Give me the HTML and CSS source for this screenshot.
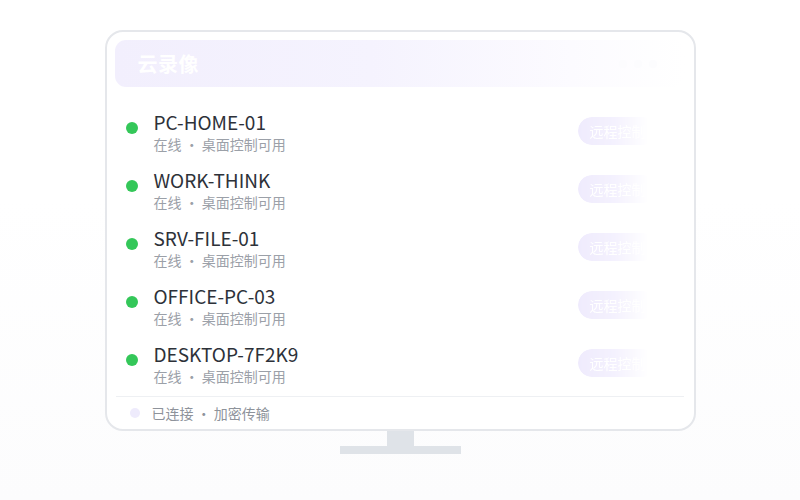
FILE: index.html
```html
<!DOCTYPE html>
<html lang="zh-CN">
<head>
<meta charset="utf-8">
<title>云录像</title>
<link rel="stylesheet" href="styles.css">
</head>
<body>
<div class="stage">
  <div class="monitor">
    <div class="screen">
      <div class="header">
        <span class="title">云录像</span>
        <span class="controls"><i></i><i></i><i></i></span>
      </div>
      <ul class="list">
        <li class="row">
          <span class="dot"></span>
          <div class="info"><div class="name">PC-HOME-01</div><div class="sub">在线 · 桌面控制可用</div></div>
          <span class="btn">远程控制</span>
        </li>
        <li class="row">
          <span class="dot"></span>
          <div class="info"><div class="name">WORK-THINK</div><div class="sub">在线 · 桌面控制可用</div></div>
          <span class="btn">远程控制</span>
        </li>
        <li class="row">
          <span class="dot"></span>
          <div class="info"><div class="name">SRV-FILE-01</div><div class="sub">在线 · 桌面控制可用</div></div>
          <span class="btn">远程控制</span>
        </li>
        <li class="row">
          <span class="dot"></span>
          <div class="info"><div class="name">OFFICE-PC-03</div><div class="sub">在线 · 桌面控制可用</div></div>
          <span class="btn">远程控制</span>
        </li>
        <li class="row">
          <span class="dot"></span>
          <div class="info"><div class="name">DESKTOP-7F2K9</div><div class="sub">在线 · 桌面控制可用</div></div>
          <span class="btn">远程控制</span>
        </li>
      </ul>
      <div class="footer">
        <span class="fdot"></span>
        <span class="ftext">已连接 · 加密传输</span>
      </div>
    </div>
    <div class="neck"></div>
    <div class="base"></div>
  </div>
</div>
</body>
</html>
```

FILE: styles.css
```css
html, body {
  margin: 0;
  padding: 0;
}
body {
  width: 800px;
  height: 500px;
  overflow: hidden;
  background: linear-gradient(180deg, #ffffff 0%, #ffffff 40%, #fcfcfd 100%);
  font-family: "Noto Sans CJK SC", "Noto Sans", sans-serif;
}
.stage {
  display: flex;
  justify-content: center;
  padding-top: 30px;
}
.monitor {
  width: 591px;
  display: flex;
  flex-direction: column;
  align-items: center;
}
.screen {
  box-sizing: border-box;
  width: 591px;
  height: 401px;
  border: 2px solid #e5e7eb;
  border-radius: 18px;
  background: #fff;
  padding: 8px 9px 0 8px;
  display: flex;
  flex-direction: column;
}
.header {
  height: 47px;
  border-radius: 11px;
  background: linear-gradient(90deg, #f2effd 0%, #f5f3fe 45%, #fcfbff 80%, #ffffff 100%);
  display: flex;
  align-items: center;
  justify-content: space-between;
  padding: 0 14px 0 23px;
  flex-shrink: 0;
}
.title {
  color: #ffffff;
  font-size: 20px;
  font-weight: 700;
  letter-spacing: 0.5px;
}
.controls {
  display: flex;
  gap: 7px;
  margin-right: 14px;
}
.controls i {
  width: 8px;
  height: 8px;
  border-radius: 50%;
  background: #fcfcfe;
}
.list {
  list-style: none;
  margin: 16px 0 0 0;
  padding: 0;
}
.row {
  height: 58px;
  display: flex;
  align-items: center;
  padding: 0 27px 0 11px;
}
.dot {
  width: 12px;
  height: 12px;
  border-radius: 50%;
  background: #34c759;
  margin-bottom: 8px;
  margin-right: 16px;
  flex-shrink: 0;
}
.info {
  flex: 1;
  display: flex;
  flex-direction: column;
}
.name {
  font-size: 19px;
  line-height: 24px;
  color: #2d3139;
}
.sub {
  font-size: 14px;
  line-height: 20px;
  color: #9ba0a8;
}
.btn {
  height: 28px;
  line-height: 28px;
  padding: 0 12px;
  border-radius: 14px;
  background: #efebfd;
  color: #ffffff;
  font-size: 14px;
  margin-bottom: 2px;
  -webkit-mask-image: linear-gradient(90deg, #000 0%, rgba(0,0,0,0.7) 45%, rgba(0,0,0,0) 88%);
  mask-image: linear-gradient(90deg, #000 0%, rgba(0,0,0,0.7) 45%, rgba(0,0,0,0) 88%);
}
.footer {
  margin-top: 3px;
  border-top: 1px solid #eef0f3;
  height: 32px;
  display: flex;
  align-items: center;
  padding-left: 14px;
  margin-right: 1px;
  margin-left: 1px;
}
.fdot {
  width: 10px;
  height: 10px;
  border-radius: 50%;
  background: #eeebfc;
  margin-right: 12px;
}
.ftext {
  font-size: 14px;
  color: #8e939b;
}
.neck {
  width: 27px;
  height: 15px;
  background: #dfe3e8;
}
.base {
  width: 121px;
  height: 8px;
  background: #dfe3e8;
}
```
